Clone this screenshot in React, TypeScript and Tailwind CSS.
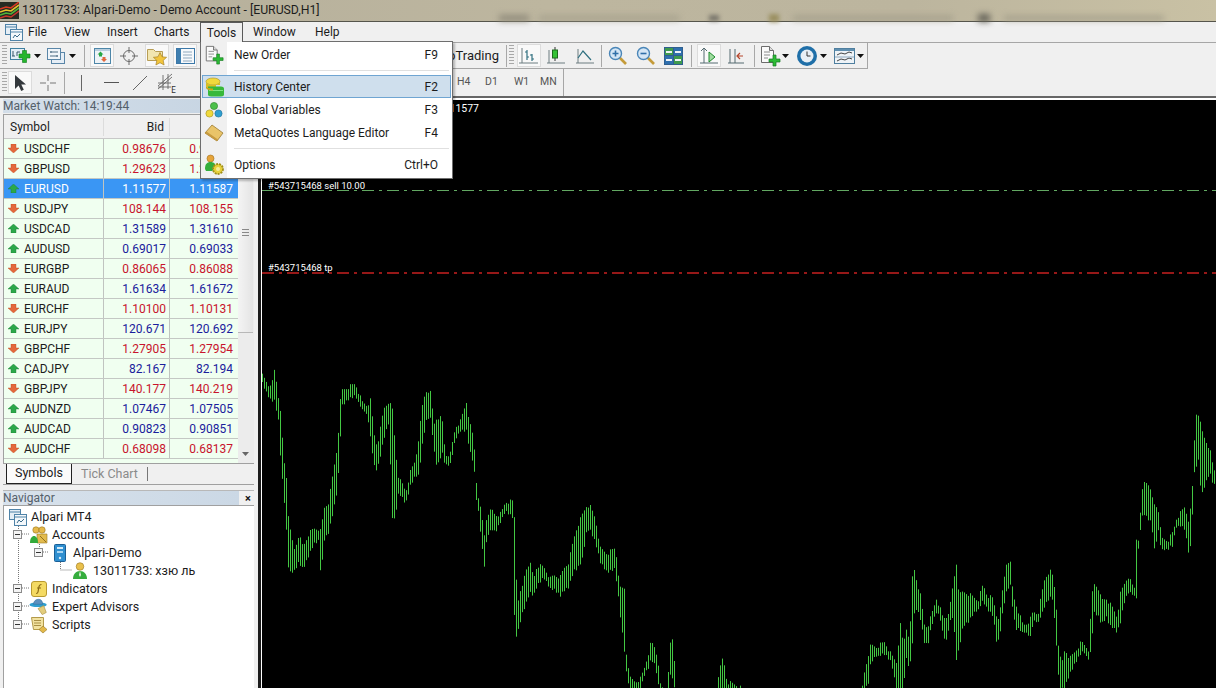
import { FC, ReactNode } from 'react';

const FONT = 'font-["Roboto","Noto_Sans",sans-serif]';

interface Quote {
  symbol: string;
  bid: string;
  ask: string;
  up: boolean;
}

const quotes: Quote[] = [
  { symbol: 'USDCHF', bid: '0.98676', ask: '0.98699', up: false },
  { symbol: 'GBPUSD', bid: '1.29623', ask: '1.29650', up: false },
  { symbol: 'EURUSD', bid: '1.11577', ask: '1.11587', up: true },
  { symbol: 'USDJPY', bid: '108.144', ask: '108.155', up: false },
  { symbol: 'USDCAD', bid: '1.31589', ask: '1.31610', up: true },
  { symbol: 'AUDUSD', bid: '0.69017', ask: '0.69033', up: true },
  { symbol: 'EURGBP', bid: '0.86065', ask: '0.86088', up: false },
  { symbol: 'EURAUD', bid: '1.61634', ask: '1.61672', up: true },
  { symbol: 'EURCHF', bid: '1.10100', ask: '1.10131', up: false },
  { symbol: 'EURJPY', bid: '120.671', ask: '120.692', up: true },
  { symbol: 'GBPCHF', bid: '1.27905', ask: '1.27954', up: false },
  { symbol: 'CADJPY', bid: '82.167', ask: '82.194', up: true },
  { symbol: 'GBPJPY', bid: '140.177', ask: '140.219', up: false },
  { symbol: 'AUDNZD', bid: '1.07467', ask: '1.07505', up: true },
  { symbol: 'AUDCAD', bid: '0.90823', ask: '0.90851', up: true },
  { symbol: 'AUDCHF', bid: '0.68098', ask: '0.68137', up: false },
];

// chart outline read off the reference: [x, top, bottom] in 3x crop coords
const leftPts: number[][] = [
  [6,38,72],[20,60,105],[32,80,125],[43,18,125],[55,110,190],[62,170,325],[70,290,400],[78,345,515],[85,475,640],[92,522,640],[103,565,635],[115,518,610],[128,555,630],[145,515,590],[160,500,555],[175,500,545],[182,510,665],[190,440,545],[205,420,520],[220,320,450],[232,245,385],[238,130,265],[245,85,140],[265,75,120],[285,65,110],[305,120,150],[320,130,155],[330,115,235],[340,200,310],[345,250,338],[355,230,315],[370,140,240],[385,118,190],[397,145,500],[405,265,470],[415,350,400],[428,370,420],[436,390,435],[450,330,380],[465,295,350],[475,225,350],[488,115,240],[500,82,175],[512,95,180],[520,190,270],[530,165,325],[545,170,280],[555,280,320],[570,275,315],[585,195,240],[600,178,215],[618,120,215],[628,185,275],[640,230,315],[648,360,420],[655,410,465],[665,470,565],[672,520,620],[680,455,530],[695,445,510],[705,460,520],[722,455,485],[735,420,455],[757,418,475],[763,475,830],[770,720,830],[785,680,765],[795,625,740],[808,600,700],[820,650,710],[830,610,680],[850,615,655],[870,650,690],[880,640,690],[900,645,710],[910,620,695],[925,600,685],[940,530,635],[950,495,630],[965,460,605],[980,428,510],[990,435,515],[1005,470,550],[1020,560,610],[1040,575,640],[1062,560,630],[1070,590,675],[1078,680,755],[1092,680,875],[1098,875,940],[1110,950,1000],[1125,960,1000],[1140,950,1000],[1150,925,950],[1165,870,925],[1172,840,900],[1185,860,920],[1195,910,985],[1200,970,1000],[1220,1000,1010],[1225,905,1000],[1232,825,930],[1240,845,980],[1245,975,1000],[1250,1010,1040],[1365,1010,1040],[1370,955,1000],[1388,885,990],[1400,960,1000],[1430,970,1000],
];
const rightPts: number[][] = [
  [60,1010,1040],[375,1010,1040],[380,950,990],[395,880,980],[403,850,910],[420,855,890],[445,840,885],[465,880,910],[480,900,990],[493,780,990],[500,850,990],[510,800,900],[520,830,930],[530,600,830],[535,630,750],[542,660,750],[552,700,780],[565,795,855],[575,790,855],[585,760,800],[600,710,760],[610,735,770],[620,770,830],[630,765,845],[640,740,790],[650,668,770],[660,605,900],[668,700,870],[680,690,800],[695,695,790],[710,705,765],[725,715,750],[740,668,725],[752,700,750],[770,710,770],[782,770,860],[790,760,830],[800,670,750],[812,592,690],[822,605,680],[830,700,760],[838,725,810],[850,760,810],[860,790,825],[870,785,800],[880,775,845],[890,750,790],[905,755,780],[915,700,770],[925,650,740],[940,625,715],[950,645,720],[956,690,810],[962,765,880],[968,885,985],[980,900,990],[985,860,985],[1000,890,945],[1015,870,915],[1035,840,880],[1050,855,880],[1058,865,905],[1065,710,865],[1072,665,760],[1085,675,770],[1095,715,795],[1110,710,775],[1120,725,800],[1130,740,805],[1142,765,820],[1152,695,790],[1162,670,735],[1175,642,700],[1190,675,705],[1199,680,715],[1200,530,715],[1203,530,690],[1206,530,565],[1212,458,510],[1220,360,460],[1235,360,480],[1245,400,490],[1255,430,580],[1265,435,510],[1275,530,575],[1295,535,565],[1310,510,560],[1320,470,490],[1345,435,510],[1358,480,590],[1365,420,545],[1372,315,355],[1376,155,330],[1388,155,300],[1394,200,415],[1405,230,380],[1420,260,340],[1430,315,375],[1438,335,380],
];

const pts = [
  ...leftPts.map(([x, t, b]) => [260 + x / 3, 360 + t / 3, 360 + b / 3]),
  ...rightPts.map(([x, t, b]) => [736 + x / 3, 360 + t / 3, 360 + b / 3]),
];

const bars: number[][] = [];
for (let x = 262; x < 1216; x += 2) {
  let k = pts.findIndex((p) => p[0] >= x);
  if (k < 1) k = k === 0 ? 1 : pts.length - 1;
  const a = pts[k - 1];
  const c = pts[k];
  const f = Math.min(1, Math.max(0, (x - a[0]) / (c[0] - a[0] || 1)));
  const top = a[1] + (c[1] - a[1]) * f + (x * 13) % 5;
  const bottom = a[2] + (c[2] - a[2]) * f - (x * 7) % 4;
  bars.push([x + 0.5, top, Math.max(bottom, top + 8)]);
}

const Grip: FC = () => (
  <div className="w-[5px] h-[21px] shrink-0 ml-[2px] bg-[repeating-linear-gradient(to_bottom,#a8a8a8_0,#a8a8a8_1px,#f0f0f0_1px,#f0f0f0_3px)]" />
);

const Sep: FC<{ className: string }> = ({ className }) => (
  <div className={`w-px h-[22px] shrink-0 bg-[#a8a8a8] ${className}`} />
);

const Caret: FC<{ className: string }> = ({ className }) => (
  <svg width="7" height="4" viewBox="0 0 7 4" className={`shrink-0 ${className}`}>
    <path d="M0 0h7L3.5 4z" fill="#111" />
  </svg>
);

const Btn: FC<{ className: string; active?: boolean; children: ReactNode }> = ({ className, active, children }) => (
  <div
    className={`w-[24px] h-[23px] shrink-0 flex items-center justify-center ${className} ${
      active ? 'bg-[#f9f9f9] border border-[#dcdcdc]' : ''
    }`}
  >
    {children}
  </div>
);

const NewChartIcon: FC = () => (
  <svg width="22" height="20" viewBox="0 0 22 20">
    <rect x="1.5" y="2.5" width="14" height="11" fill="#e4eef6" stroke="#3f7f9f" />
    <path d="M4 5v5M3 10h3M8 6v4M8 6h3" stroke="#37586a" fill="none" />
    <path d="M10 8h3.5V4.5h4V8H21v4h-3.5v4.5h-4V12H10z" fill="#25b52d" stroke="#0e7a1c" strokeWidth=".6" />
  </svg>
);

const ProfilesIcon: FC = () => (
  <svg width="20" height="20" viewBox="0 0 20 20">
    <rect x="5.5" y="6.5" width="13" height="11" fill="#e6eef6" stroke="#5a86a8" />
    <rect x="1.5" y="2.5" width="13" height="11" fill="#f0f5fa" stroke="#5a86a8" />
    <path d="M4 6h8M4 10h8" stroke="#4f6f85" fill="none" />
    <path d="M5 5v2M11 9v2" stroke="#4f6f85" />
  </svg>
);

const MarketIcon: FC = () => (
  <svg width="17" height="18" viewBox="0 0 17 18">
    <rect x=".5" y="1.5" width="16" height="15" fill="#eef3f7" stroke="#4d86a8" />
    <rect x="1" y="2" width="15" height="2" fill="#b9cfdf" />
    <path d="M6.5 4.5l3 3H8v2H5v-2H3.5z" fill="#28a745" />
    <path d="M10 15l-3-3h1.5v-2h3v2H13z" fill="#e2683c" />
  </svg>
);

const CrossIcon: FC = () => (
  <svg width="20" height="20" viewBox="0 0 20 20" fill="none" stroke="#6b6b6b">
    <circle cx="10" cy="10" r="5.5" />
    <path d="M10 1v6M10 13v6M1 10h6M13 10h6" />
  </svg>
);

const FolderStarIcon: FC = () => (
  <svg width="22" height="20" viewBox="0 0 22 20">
    <path d="M1.5 3.5h6l2 2h7v9h-15z" fill="#f2e6b0" stroke="#b79d55" />
    <path d="M14 6.5l2 4.3 4.6.5-3.4 3.1.9 4.6-4.1-2.3-4.1 2.3.9-4.6-3.4-3.1 4.6-.5z" fill="#f2c53d" stroke="#a8842a" strokeWidth=".7" />
  </svg>
);

const TerminalIcon: FC = () => (
  <svg width="19" height="18" viewBox="0 0 19 18">
    <rect x=".5" y="1.5" width="18" height="15" fill="#f6f9fc" stroke="#3c78a8" />
    <rect x="1" y="2" width="4" height="14" fill="#3f7fb0" />
    <path d="M7 5h9M7 8h9M7 11h9M7 14h9" stroke="#8fa8bd" />
  </svg>
);

const BarsIcon: FC = () => (
  <svg width="20" height="20" viewBox="0 0 20 20" fill="none" stroke="#2f6f7f">
    <path d="M3 2v15M0 17h19" stroke="#6c7c80" />
    <path d="M8 4v10M6 6h2M8 11h2M13 8v7M11 9h2M13 13h2" strokeWidth="1.2" />
  </svg>
);

const CandleIcon: FC = () => (
  <svg width="20" height="20" viewBox="0 0 20 20" fill="none">
    <path d="M3 4v13M1 17h18" stroke="#6c7c80" />
    <path d="M9 1v14" stroke="#333" />
    <rect x="6.5" y="4" width="5" height="8" fill="#34c234" stroke="#1c6a1c" />
  </svg>
);

const LineIcon: FC = () => (
  <svg width="20" height="20" viewBox="0 0 20 20" fill="none">
    <path d="M3 3v14M1 17h18" stroke="#6c7c80" />
    <path d="M3 12l5-7 8 9" stroke="#2f6f7f" strokeWidth="1.2" />
  </svg>
);

const ZoomIcon: FC<{ plus?: boolean }> = ({ plus }) => (
  <svg width="20" height="20" viewBox="0 0 20 20" fill="none">
    <path d="M11.5 11.5l6.5 6.5" stroke="#c49b3a" strokeWidth="2.6" />
    <circle cx="7.5" cy="7.5" r="6" fill="#d4e6f5" stroke="#4a86b8" strokeWidth="1.4" />
    <path d={plus ? 'M4.5 7.5h6M7.5 4.5v6' : 'M4.5 7.5h6'} stroke="#2f6fa8" strokeWidth="1.6" />
  </svg>
);

const TileIcon: FC = () => (
  <svg width="20" height="20" viewBox="0 0 20 20">
    <rect x="0" y="1" width="19" height="18" fill="#2f5f8f" />
    <rect x="1" y="2" width="8" height="7" fill="#3e9a4e" />
    <rect x="10" y="2" width="8" height="7" fill="#2f6fae" />
    <rect x="1" y="10" width="8" height="8" fill="#2f6fae" />
    <rect x="10" y="10" width="8" height="8" fill="#3e9a4e" />
    <path d="M2 6h6M11 6h6M2 14h6M11 14h6" stroke="#eef3f6" strokeWidth="2" />
  </svg>
);

const AutoScrollIcon: FC = () => (
  <svg width="20" height="20" viewBox="0 0 20 20" fill="none">
    <path d="M5 3v14M1 17h18M2 5l3-3 3 3" stroke="#546a70" />
    <path d="M10 6l6 5-6 5z" fill="#9fdc9f" stroke="#1f8a2f" />
  </svg>
);

const ShiftIcon: FC = () => (
  <svg width="20" height="20" viewBox="0 0 20 20" fill="none">
    <path d="M3 3v14M8 3v14M1 17h16" stroke="#546a70" />
    <path d="M16 10h-5M13 7l-3 3 3 3" stroke="#b5452a" strokeWidth="1.2" />
  </svg>
);

const NewDocIcon: FC<{ size?: number }> = ({ size = 22 }) => (
  <svg width={size} height={size} viewBox="0 0 22 22">
    <path d="M2.5 1.5h8l4 4v12h-12z" fill="#fafafa" stroke="#6c6c6c" />
    <path d="M10.5 1.5v4h4" fill="#ddd" stroke="#6c6c6c" />
    <path d="M5 7h6M5 10h6M5 13h4" stroke="#8a8a8a" />
    <path d="M14 10h3v4h4v3h-4v4h-3v-4h-4v-3h4z" fill="#2cbb35" stroke="#167a22" strokeWidth=".7" />
  </svg>
);

const ClockIcon: FC = () => (
  <svg width="22" height="22" viewBox="0 0 22 22">
    <circle cx="11" cy="11" r="10" fill="#1f6fa8" />
    <circle cx="11" cy="11" r="6.5" fill="#e8eff5" />
    <path d="M11 6.5V11h3.5" stroke="#333" fill="none" />
  </svg>
);

const TemplateIcon: FC = () => (
  <svg width="22" height="20" viewBox="0 0 22 20" fill="none">
    <rect x=".5" y="2.5" width="20" height="15" fill="#eef3f7" stroke="#4f7f9f" />
    <rect x="1" y="3" width="19" height="2" fill="#5f8fb0" />
    <path d="M3 9l4-2 4 1 4-2 3 1M3 15l4-2 4 1 4-2 3 1" stroke="#444" />
    <path d="M1 11h19" stroke="#8fa8bd" />
  </svg>
);

const CursorIcon: FC = () => (
  <svg width="14" height="18" viewBox="0 0 14 18">
    <path d="M2 1v14l3.6-3.4 2.6 5.4 2.6-1.2-2.5-5.2H13z" fill="#33383c" />
  </svg>
);

const PlusLineIcon: FC = () => (
  <svg width="18" height="18" viewBox="0 0 18 18" stroke="#777" fill="none">
    <path d="M9 1v6M9 11v6M1 9h6M11 9h6" />
  </svg>
);

const FiboIcon: FC = () => (
  <svg width="24" height="22" viewBox="0 0 24 22" fill="none" stroke="#555">
    <path d="M3 14l14-12M3 17l14-12M3 11h13M3 15h13M8 3v15M13 2v15" strokeWidth=".8" />
    <text x="16" y="21" fontSize="9" fill="#333" stroke="none" fontFamily="Noto Sans">E</text>
  </svg>
);

const HistoryIcon: FC = () => (
  <svg width="20" height="20" viewBox="0 0 20 20">
    <ellipse cx="8" cy="4.5" rx="7" ry="3.5" fill="#f2d93c" stroke="#a88f1c" strokeWidth=".6" />
    <path d="M1 4.5v4c0 2 3 3.5 7 3.5 1 0 2 0 3-.3V8H15V4.5c0 2-3 3.5-7 3.5S1 6.5 1 4.5z" fill="#d9be22" />
    <path d="M3 9.5h13c2 0 3 1 3 2v6c0 1-1 2-3 2H6c-2 0-3-1-3-2z" fill="#37b83a" />
    <path d="M4 13.5h14" stroke="#7fe27f" />
    <path d="M1 8.5c0 2 3 3 7 3v2c-4 0-7-1-7-3z" fill="#c8a915" />
  </svg>
);

const GlobalsIcon: FC = () => (
  <svg width="18" height="18" viewBox="0 0 18 18">
    <circle cx="9" cy="5" r="3.6" fill="#4cc04a" stroke="#2b7f2a" strokeWidth=".6" />
    <circle cx="4.5" cy="12.5" r="3.6" fill="#f0d93c" stroke="#a18f17" strokeWidth=".6" />
    <circle cx="13.5" cy="12.5" r="3.6" fill="#2f9fd0" stroke="#1d6e98" strokeWidth=".6" />
  </svg>
);

const EditorIcon: FC = () => (
  <svg width="20" height="18" viewBox="0 0 20 18">
    <path d="M8 1l11 8-6 8L1 9z" fill="#e9c469" stroke="#9a7a30" strokeWidth=".8" />
    <path d="M1 9l12 8 1-1.6L2.4 7.4z" fill="#c79a3f" />
  </svg>
);

const OptionsIcon: FC = () => (
  <svg width="22" height="22" viewBox="0 0 22 22">
    <circle cx="7.5" cy="4.5" r="3.5" fill="#e6a43a" stroke="#9f6f1c" strokeWidth=".6" />
    <path d="M2 15c0-5 2-7 5.5-7S13 10 13 14l-4 3H3z" fill="#34ae3c" />
    <circle cx="15" cy="15" r="5" fill="#e6d03a" stroke="#a08e18" strokeWidth="1.8" strokeDasharray="2 1" />
    <circle cx="15" cy="15" r="2" fill="#f7ee9a" />
  </svg>
);

const WindowIcon: FC = () => (
  <svg width="18" height="17" viewBox="0 0 18 17" fill="none" stroke="#4f83a8">
    <rect x=".5" y=".5" width="11" height="10" fill="#e5eef5" />
    <path d="M1 3h10" />
    <rect x="5.5" y="5.5" width="12" height="11" fill="#f4f8fb" />
    <path d="M6 8h11" />
    <path d="M8 14l2-3 2 2 3-3" stroke="#3a6a8a" />
  </svg>
);

const AccountsIcon: FC = () => (
  <svg width="20" height="18" viewBox="0 0 20 18">
    <circle cx="7" cy="4" r="3.2" fill="#e6b94a" stroke="#99761f" strokeWidth=".6" />
    <circle cx="13" cy="4" r="3.2" fill="#e6b94a" stroke="#99761f" strokeWidth=".6" />
    <path d="M8 8h10v9H8z" fill="#e3bb4d" stroke="#9a7a25" strokeWidth=".6" />
    <path d="M1 17c0-5 2-7 4-7s4 2 4 7z" fill="#33aa3a" />
    <path d="M11 10l6 6" stroke="#8f6f1f" />
  </svg>
);

const ServerIcon: FC = () => (
  <svg width="12" height="18" viewBox="0 0 12 18">
    <rect x=".5" y=".5" width="11" height="17" rx="1" fill="#2f8fd0" stroke="#1a5f96" />
    <rect x="3" y="3" width="6" height="2" fill="#d5ecfa" />
    <rect x="3" y="7" width="6" height="2" fill="#a8d5f2" />
    <circle cx="6" cy="14" r="1.2" fill="#d5ecfa" />
  </svg>
);

const UserIcon: FC = () => (
  <svg width="14" height="18" viewBox="0 0 14 18">
    <circle cx="7" cy="4.5" r="3.8" fill="#e9c04c" stroke="#99761f" strokeWidth=".6" />
    <path d="M0 17c0-5 3-8 7-8s7 3 7 8z" fill="#36ad3e" />
    <path d="M7 9l1 4-1 2-1-2z" fill="#e8f5e8" />
  </svg>
);

const IndicatorIcon: FC = () => (
  <svg width="16" height="16" viewBox="0 0 16 16">
    <rect x=".5" y=".5" width="15" height="15" rx="2.5" fill="#f4da63" stroke="#b99a30" />
    <path d="M10.5 3.5c-2 0-2.5 1-2.7 3L7 11c-.2 1-.8 1.5-2 1.5M6 7h4" stroke="#8a6a14" strokeWidth="1.2" fill="none" />
  </svg>
);

const AdvisorIcon: FC = () => (
  <svg width="22" height="18" viewBox="0 0 22 18">
    <ellipse cx="10" cy="6.5" rx="9.5" ry="2.6" fill="#2f9fd0" />
    <path d="M5 6c0-4 3-5.5 5.5-5.5S15 2 15 6z" fill="#5c91bf" stroke="#2f6590" strokeWidth=".5" />
    <path d="M11 9h7l-1 8h-5z" fill="#e3cd7c" stroke="#a48a36" strokeWidth=".6" transform="rotate(-28 14 12)" />
  </svg>
);

const ScriptIcon: FC = () => (
  <svg width="20" height="18" viewBox="0 0 20 18">
    <path d="M2.5 1.5h12v12h-10z" fill="#f2e2a0" stroke="#b39a4a" />
    <path d="M5 4.5h7M5 7h7M5 9.5h7" stroke="#a88f45" />
    <path d="M14 10l4 3.5-4 3.5-4-3.5z" fill="#e3b94a" stroke="#94731f" strokeWidth=".6" />
  </svg>
);

const QuoteArrow: FC<{ up: boolean }> = ({ up }) => (
  <svg width="11" height="9" viewBox="0 0 11 9" className="shrink-0">
    {up ? (
      <path d="M5.5 0L11 5H8v4H3V5H0z" fill="#2ba84a" stroke="#1a7a33" strokeWidth=".4" />
    ) : (
      <path d="M5.5 9L11 4H8V0H3v4H0z" fill="#e4683c" stroke="#b8461f" strokeWidth=".4" />
    )}
  </svg>
);

const MenuRow: FC<{ icon: ReactNode; label: string; shortcut: string; active?: boolean; className: string }> = ({
  icon,
  label,
  shortcut,
  active,
  className,
}) => (
  <div
    className={`relative flex items-center ${className} ${
      active ? 'mx-px pr-[12px] border border-[#6fa5d2] bg-[#cfdfed]' : 'pr-[14px]'
    }`}
  >
    <div className={`flex items-center justify-center shrink-0 ${active ? 'w-[24px]' : 'w-[26px]'}`}>{icon}</div>
    <span className="ml-[7px] flex-1">{label}</span>
    <span>{shortcut}</span>
  </div>
);

const TreeRow: FC<{ className: string; icon: ReactNode; label: string }> = ({ className, icon, label }) => (
  <div className={`h-[18px] flex items-center ${className}`}>
    <div className="w-[20px] flex justify-center shrink-0">{icon}</div>
    <span className="ml-[3px] whitespace-nowrap">{label}</span>
  </div>
);

const App: FC = () => {
  return (
    <div className={`relative w-[1216px] h-[688px] overflow-hidden flex flex-col bg-[#f0f0f0] text-[12px] text-[#1c1c1c] ${FONT}`}>
      {/* Title bar */}
      <div className="h-[22px] shrink-0 flex items-center border-b border-[#55554c] bg-[linear-gradient(to_right,#b4ae9b,#bdb69f_45%,#bcb59e_75%,#c9c1a4)]">
        <svg width="19" height="17" viewBox="0 0 19 17" className="shrink-0">
          <rect width="19" height="17" fill="#262a22" />
          <path d="M0 7l6-2 5 1 8-6" stroke="#d93a22" strokeWidth="1.6" fill="none" />
          <path d="M0 10l6-2 5 1 8-6" stroke="#e8c02a" strokeWidth="1.6" fill="none" />
          <path d="M0 13l6-2 5 1 8-6" stroke="#4eb33a" strokeWidth="1.6" fill="none" />
          <path d="M0 16l6-2 5 1 8-6" stroke="#c8362a" strokeWidth="1.4" fill="none" />
        </svg>
        <span className="ml-[3px] w-[297px] shrink-0 text-[12.25px] leading-none whitespace-nowrap">13011733: Alpari-Demo - Demo Account - [EURUSD,H1]</span>
        <div className="ml-[180px] w-[30px] h-[6px] mt-[14px] bg-[#8f8a7a] blur-[3px]" />
        <div className="ml-[10px] w-[140px] h-[4px] mt-[14px] bg-[#a29d8a] blur-[3px]" />
        <div className="ml-[30px] w-[10px] h-[6px] mt-[14px] bg-[#77746a] blur-[2px]" />
        <div className="ml-[50px] w-[10px] h-[8px] mt-[14px] bg-[#9a8f60] blur-[2px]" />
        <div className="ml-[14px] w-[160px] h-[4px] mt-[14px] bg-[#a09b88] blur-[3px]" />
        <div className="ml-[25px] w-[12px] h-[8px] mt-[14px] bg-[#66645a] blur-[3px]" />
        <div className="ml-[14px] w-[160px] h-[4px] mt-[14px] bg-[#a09b88] blur-[3px]" />
      </div>

      {/* Menu bar */}
      <div className="h-[20px] shrink-0 flex items-center bg-[#f0f0f0]">
        <div className="ml-[5px] w-[18px] shrink-0"><WindowIcon /></div>
        <span className="ml-[5px] w-[19px]">File</span>
        <span className="ml-[17px] w-[26px]">View</span>
        <span className="ml-[17px] w-[30px]">Insert</span>
        <span className="ml-[17px] w-[35px]">Charts</span>
        <span className="ml-[17px] w-[30px]">Tools</span>
        <span className="ml-[17px] w-[45px]">Window</span>
        <span className="ml-[17px]">Help</span>
      </div>

      {/* Toolbars */}
      <div className="h-[27px] shrink-0 border-t border-[#a6a6a6] flex items-center">
        <div className="w-[868px] h-full flex items-center border-r border-b border-[#a6a6a6]">
          <Grip />
          <div className="ml-[2px] shrink-0"><NewChartIcon /></div>
          <Caret className="ml-[3px]" />
          <div className="ml-[5px] shrink-0"><ProfilesIcon /></div>
          <Caret className="ml-[3px]" />
          <Sep className="ml-[8px]" />
          <Btn className="ml-[5px]" active><MarketIcon /></Btn>
          <Btn className="ml-[3px]"><CrossIcon /></Btn>
          <Btn className="ml-[4px]" active><FolderStarIcon /></Btn>
          <Btn className="ml-[4px]" active><TerminalIcon /></Btn>
          <span className="ml-[251px] w-[51px] shrink-0 whitespace-nowrap flex justify-end text-[13px]">AutoTrading</span>
          <Sep className="ml-[7px]" />
          <Grip />
          <Btn className="ml-[3px]" active><BarsIcon /></Btn>
          <Btn className="ml-[3px]"><CandleIcon /></Btn>
          <Btn className="ml-[5px]"><LineIcon /></Btn>
          <Sep className="ml-[4px]" />
          <Btn className="ml-[4px]"><ZoomIcon plus /></Btn>
          <Btn className="ml-[4px]"><ZoomIcon /></Btn>
          <Btn className="ml-[4px]"><TileIcon /></Btn>
          <Sep className="ml-[5px]" />
          <Btn className="ml-[5px]" active><AutoScrollIcon /></Btn>
          <Btn className="ml-[4px]"><ShiftIcon /></Btn>
          <Sep className="ml-[5px]" />
          <div className="ml-[4px] shrink-0"><NewDocIcon /></div>
          <Caret className="ml-[1px]" />
          <div className="ml-[7px] shrink-0"><ClockIcon /></div>
          <Caret className="ml-[2px]" />
          <div className="ml-[7px] shrink-0"><TemplateIcon /></div>
          <Caret className="ml-[1px]" />
        </div>
      </div>
      <div className="h-[27px] shrink-0 flex items-center">
        <div className="w-[564px] h-full flex items-center border-r border-[#a6a6a6]">
          <Grip />
          <Btn className="ml-[1px]" active><CursorIcon /></Btn>
          <Btn className="ml-[4px]"><PlusLineIcon /></Btn>
          <Sep className="ml-[4px]" />
          <div className="ml-[16px] w-px h-[16px] shrink-0 bg-[#666]" />
          <div className="ml-[22px] w-[15px] h-px shrink-0 bg-[#555]" />
          <svg width="16" height="16" viewBox="0 0 16 16" className="ml-[13px] shrink-0"><path d="M1 15L15 1" stroke="#666" /></svg>
          <div className="ml-[7px] shrink-0"><FiboIcon /></div>
          <div className="ml-[278px] flex text-[10.5px] text-[#555] leading-none">
            <span className="w-[16px]">H4</span>
            <span className="ml-[12px] w-[16px]">D1</span>
            <span className="ml-[13px] w-[18px]">W1</span>
            <span className="ml-[8px] w-[18px]">MN</span>
          </div>
        </div>
      </div>
      <div className="h-[2px] shrink-0 bg-[#666]" />

      {/* Main */}
      <div className="flex-1 min-h-0 flex">
        {/* Left panels */}
        <div className="w-[258px] shrink-0 flex flex-col">
          <div className="ml-[3px] mr-[15px] h-[14px] mt-px shrink-0 flex items-center bg-[linear-gradient(to_right,#d3dee9,#c6d4e2)] text-[#54606a] text-[12px] leading-none">
            Market Watch: 14:19:44
          </div>
          <div className="ml-[3px] mr-[4px] mt-px h-[349px] shrink-0 flex border-t border-l border-[#a0a0a0] overflow-hidden">
            <div className="w-[234px] shrink-0 flex flex-col">
              <div className="h-[24px] shrink-0 flex items-center bg-[#f0f0f0] border-b border-[#c8c8c8]">
                <span className="w-[100px] pl-[6px] border-r border-[#dcdcdc]">Symbol</span>
                <span className="w-[66px] pr-[5px] text-right border-r border-[#dcdcdc]">Bid</span>
                <span className="w-[68px] pr-[5px] text-right">Ask</span>
              </div>
              {quotes.map((q) => {
                const sel = q.symbol === 'EURUSD';
                const tone = sel ? 'text-white' : q.up ? 'text-[#1a209c]' : 'text-[#c8142c]';
                return (
                  <div
                    key={q.symbol}
                    className={`h-[20px] shrink-0 flex items-center border-b border-[#c4c8c4] ${
                      sel ? 'bg-[#3a96f4]' : 'bg-[#f0fff0]'
                    }`}
                  >
                    <div className={`w-[100px] h-full flex items-center gap-[5px] pl-[4px] border-r border-[#c0c4c0] ${sel ? 'text-white' : ''}`}>
                      <QuoteArrow up={q.up} />
                      {q.symbol}
                    </div>
                    <div className={`w-[66px] h-full flex items-center justify-end pr-[3px] border-r border-[#c0c4c0] ${tone}`}>{q.bid}</div>
                    <div className={`w-[68px] h-full flex items-center justify-end pr-[5px] ${tone}`}>{q.ask}</div>
                  </div>
                );
              })}
              <div className="h-[6px] shrink-0 bg-[#f0fff0]" />
            </div>
            {/* Scrollbar */}
            <div className="flex-1 flex flex-col bg-[#ececec]">
              <div className="h-[18px] shrink-0" />
              <div className="w-[15px] h-[200px] shrink-0 flex items-center justify-center bg-[linear-gradient(to_right,#f4f4f4,#e4e4e4)] border-b border-[#b8b8b8]">
                <div className="w-[7px] h-[7px] bg-[repeating-linear-gradient(to_bottom,#888_0,#888_1px,transparent_1px,transparent_3px)]" />
              </div>
              <div className="flex-1" />
              <div className="w-[15px] h-[18px] shrink-0 flex items-center justify-center">
                <svg width="7" height="4" viewBox="0 0 7 4"><path d="M0 0h7L3.5 4z" fill="#666" /></svg>
              </div>
            </div>
          </div>

          {/* Tabs */}
          <div className="ml-[3px] mr-[4px] h-[22px] shrink-0 flex items-stretch border-t border-[#a0a0a0] border-b">
            <div className="ml-[3px] w-[66px] flex items-center justify-center bg-[#fbfbfb] border-l border-r border-b border-[#222] text-[12.5px]">Symbols</div>
            <span className="ml-[9px] self-center text-[#8a8a8a] text-[12.5px]">Tick Chart</span>
            <div className="ml-[9px] my-[3px] w-px bg-[#777]" />
          </div>
          <div className="h-[5px] shrink-0" />
          {/* Navigator */}
          <div className="ml-[3px] mr-[4px] h-[15px] shrink-0 border-t border-[#b8b8b8] flex items-center text-[12px] leading-none">
            <div className="w-[236px] h-full flex items-center bg-[linear-gradient(to_right,#d8e2ec,#cbd8e5)] text-[#54606a]">Navigator</div>
            <span className="ml-[4px] w-[10px] text-center font-bold text-[#111] text-[11px]">×</span>
          </div>
          <div className="relative ml-[3px] mr-[4px] flex-1 bg-white border-t border-l border-[#a0a0a0] pt-[1px]">
            {/* tree connector lines */}
            <svg width="120" height="130" viewBox="0 0 120 130" className="absolute left-[-3px] top-0" fill="none" stroke="#777" strokeDasharray="1 1">
              <path d="M17.5 16V118M21 28h7M21 82h7M21 100h7M21 118h7M38.5 34v12M42 46h6M59.5 52v12h12" />
            </svg>
            {[24, 78, 96, 114].map((y) => (
              <div key={y} className="absolute left-[9px] w-[9px] h-[9px] border border-[#8a8a8a] bg-[#f4f4f4] flex items-center justify-center" style={{ top: y }}>
                <div className="w-[5px] h-px bg-[#333]" />
              </div>
            ))}
            <div className="absolute left-[30px] top-[42px] w-[9px] h-[9px] border border-[#8a8a8a] bg-[#f4f4f4] flex items-center justify-center">
              <div className="w-[5px] h-px bg-[#333]" />
            </div>
            <div className="relative pt-[1px] text-[12.5px]">
              <TreeRow className="pl-[4px]" icon={<WindowIcon />} label="Alpari MT4" />
              <TreeRow className="pl-[25px]" icon={<AccountsIcon />} label="Accounts" />
              <TreeRow className="pl-[46px]" icon={<ServerIcon />} label="Alpari-Demo" />
              <TreeRow className="pl-[66px]" icon={<UserIcon />} label="13011733: хзю ль" />
              <TreeRow className="pl-[25px]" icon={<IndicatorIcon />} label="Indicators" />
              <TreeRow className="pl-[25px]" icon={<AdvisorIcon />} label="Expert Advisors" />
              <TreeRow className="pl-[25px]" icon={<ScriptIcon />} label="Scripts" />
            </div>
          </div>
        </div>

        <div className="w-[3px] shrink-0 bg-[#1c1c1c]" />
        <div className="w-px shrink-0 bg-white" />

        {/* Chart */}
        <div className="relative flex-1 bg-black overflow-hidden text-white text-[9.5px] leading-none border-t-[2px] border-white">
          <svg width="954" height="588" viewBox="262 100 954 588" className="block">
            {bars.map(([x, t, b], i) => (
              <line key={i} x1={x} x2={x} y1={t} y2={b} stroke="#43c843" strokeWidth="1" />
            ))}
            <line x1="262" x2="1216" y1="190.5" y2="190.5" stroke="#62a862" strokeDasharray="12 5 3 5" />
            <line x1="262" x2="1216" y1="273" y2="273" stroke="#c82020" strokeWidth="1.5" strokeDasharray="12 5 3 5" />
          </svg>
          <span className="absolute left-0 top-[4px] w-[217px] text-right whitespace-nowrap overflow-hidden text-[10.5px]">EURUSD,H1  1.11577</span>
          <span className="absolute left-[6px] top-[81px] whitespace-nowrap">#543715468 sell 10.00</span>
          <span className="absolute left-[6px] top-[163px] whitespace-nowrap">#543715468 tp</span>
        </div>
      </div>

      {/* Tools menu overlay */}
      <div className="absolute left-[200px] top-[22px] w-[43px] h-[20px] border-t border-l border-r border-[#5a5a5a] bg-[#f0f0f0] flex items-center justify-center z-20">Tools</div>
      <div className="absolute left-[200px] top-[41px] w-[253px] h-[138px] z-10 border border-[#6e6e6e] shadow-[2px_2px_2px_rgba(0,0,0,.25)] flex flex-col bg-[linear-gradient(to_right,#f0f0f0_26px,#ffffff_26px)]">
        <MenuRow className="h-[26px] shrink-0" icon={<NewDocIcon size={20} />} label="New Order" shortcut="F9" />
        <div className="ml-[33px] mr-[3px] mt-[2px] h-px shrink-0 bg-[#e0e0e0]" />
        <MenuRow className="h-[23px] mt-[4px] shrink-0" active icon={<HistoryIcon />} label="History Center" shortcut="F2" />
        <MenuRow className="h-[23px] shrink-0" icon={<GlobalsIcon />} label="Global Variables" shortcut="F3" />
        <MenuRow className="h-[23px] shrink-0" icon={<EditorIcon />} label="MetaQuotes Language Editor" shortcut="F4" />
        <div className="ml-[33px] mr-[3px] mt-[4px] h-px shrink-0 bg-[#e0e0e0]" />
        <MenuRow className="h-[26px] mt-[3px] shrink-0" icon={<OptionsIcon />} label="Options" shortcut="Ctrl+O" />
      </div>
    </div>
  );
};

export default App;
